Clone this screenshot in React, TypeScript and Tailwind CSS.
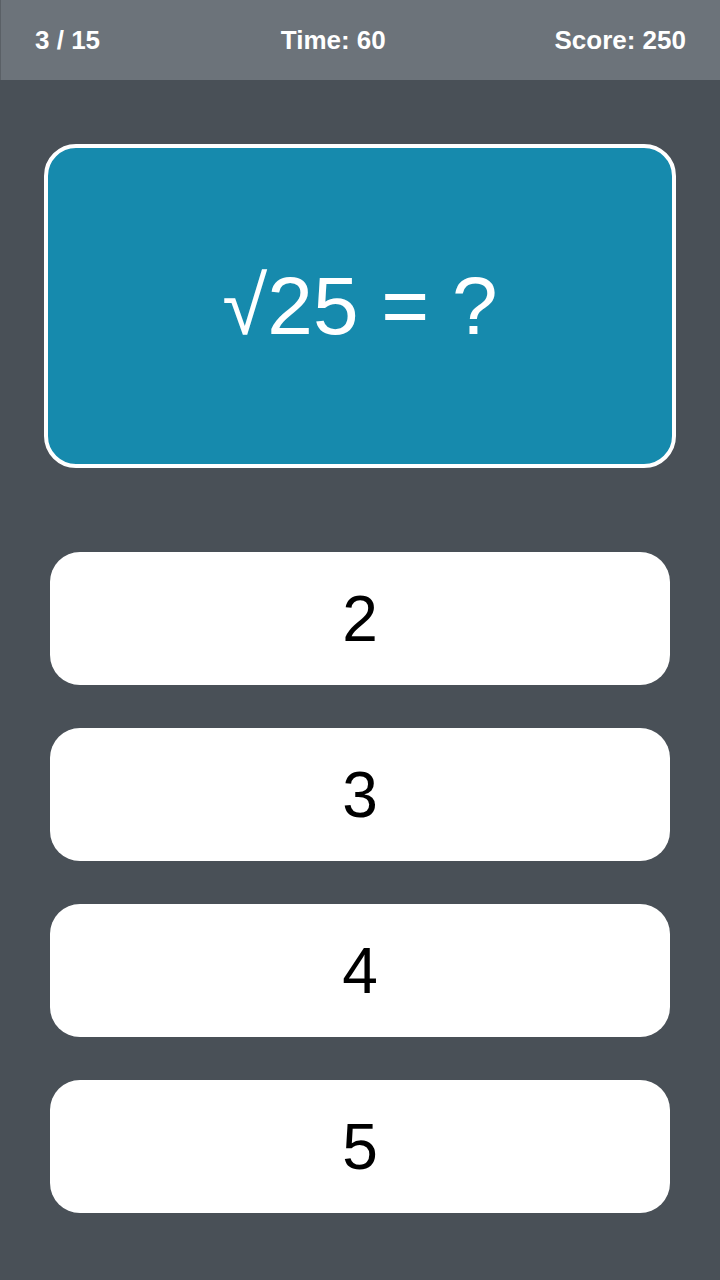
const answers = [2, 3, 4, 5];

const App = () => {
    return (
        <div
            className="min-h-[1280px] w-full bg-[#495057] flex flex-col"
            style={{ fontFamily: '"Liberation Sans", Arial, sans-serif' }}
        >
            {/* Top bar */}
            <div className="h-20 bg-[#6c737a] border-l border-[#5a6066] flex items-center justify-between px-[34px] text-[26px] font-bold text-white">
                <span>3 / 15</span>
                <span className="ml-3">Time: 60</span>
                <span>Score: 250</span>
            </div>

            {/* Question */}
            <div className="px-11 pt-16">
                <div className="h-[324px] rounded-[32px] border-4 border-white bg-[#168aad] flex items-center justify-center">
                    <span className="text-[82px] leading-none text-white">√25 = ?</span>
                </div>
            </div>

            {/* Answers */}
            <div className="px-[50px] pt-[84px] flex flex-col gap-[43px]">
                {answers.map((a) => (
                    <button
                        key={a}
                        className="h-[133px] rounded-[30px] bg-white flex items-center justify-center text-[64px] leading-none text-black"
                    >
                        {a}
                    </button>
                ))}
            </div>
        </div>
    );
};

export default App;
